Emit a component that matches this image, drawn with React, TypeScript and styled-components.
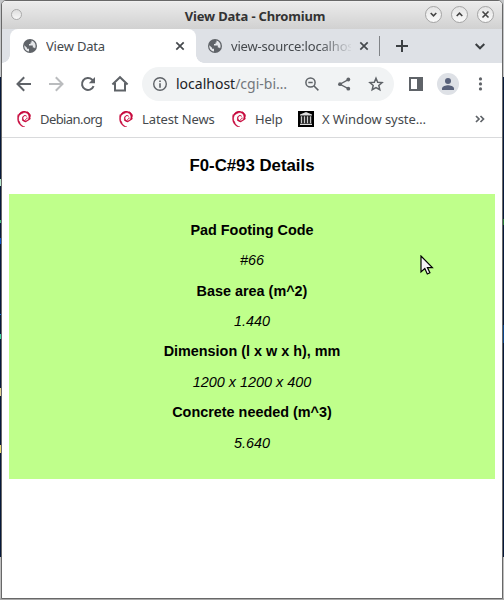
import React from "react";
import styled, { createGlobalStyle, css } from "styled-components";
import { SiDebian } from "react-icons/si";

const GlobalStyle = createGlobalStyle`
  * { box-sizing: border-box; }
  html, body { margin: 0; padding: 0; overflow: hidden; }
`;

const Desktop = styled.div`
  width: 504px;
  height: 600px;
  padding: 0 1px 1px;
  background:
    linear-gradient(#b5e8cc, #b5e8cc) 0 179px / 1px 7px no-repeat,
    linear-gradient(#40c080, #40c080) 0 220px / 1px 3px no-repeat,
    linear-gradient(#0850c8, #0850c8) 0 238px / 1px 6px no-repeat,
    linear-gradient(#0870d8, #0870d8) 0 314px / 1px 1px no-repeat,
    linear-gradient(#38d8a0, #38d8a0) 0 334px / 1px 5px no-repeat,
    linear-gradient(#e0d090, #e0d090) 0 388px / 1px 8px no-repeat,
    linear-gradient(#e8d870, #e8d870) 0 445px / 1px 8px no-repeat,
    linear-gradient(#237a38, #237a38) 503px 219px / 1px 6px no-repeat,
    linear-gradient(#08428a, #08428a) 503px 325px / 1px 18px no-repeat,
    linear-gradient(#c4c6c8 0 77px, #06183a 77px 557px, #bfbfbf 557px 598px, #aaa 598px);
`;

const Window = styled.div`
  height: 599px;
  display: flex;
  flex-direction: column;
  overflow: hidden;
  border: 1px solid #686868;
  border-radius: 5px 5px 0 0;
  background: #fff;
  font-family: "Noto Sans", sans-serif;
`;

const TitleBar = styled.header`
  height: 28px;
  flex: none;
  display: grid;
  grid-template-columns: 94px 1fr 94px;
  align-items: center;
  background: linear-gradient(#ebebeb, #d1d1d1);
  border-top: 1px solid #f0f0f0;
`;

const WindowMenu = styled.i`
  width: 11px;
  height: 11px;
  margin: -3px 0 0 9px;
  border: 1px solid #aaa;
  border-radius: 50%;
  background: linear-gradient(#dedede, #f7f7f7);
`;

const WindowTitle = styled.h1`
  margin: 1px 0 0 6px;
  text-align: center;
  white-space: nowrap;
  font-size: 13px;
  letter-spacing: -0.18px;
  line-height: 18px;
  font-weight: 700;
  color: #333;
`;

const WindowControls = styled.div`
  display: flex;
  justify-content: flex-end;
  gap: 9px;
  padding: 0 8px 2px 0;
`;

const RoundButton = styled.button`
  width: 17px;
  height: 17px;
  padding: 0;
  display: grid;
  place-items: center;
  border: 1px solid #a4a4a4;
  border-radius: 50%;
  background: linear-gradient(#e4e4e4, #fafafa);
  color: #444;
`;

const TabStrip = styled.nav`
  height: 34px;
  flex: none;
  display: flex;
  padding-left: 8px;
  background: #dee1e6;
`;

const Tab = styled.div<{ $active?: boolean }>`
  position: relative;
  width: ${(p) => (p.$active ? 186 : 183)}px;
  height: 34px;
  padding: 0 ${(p) => (p.$active ? 11 : 10)}px 0 ${(p) => (p.$active ? 12 : 11)}px;
  display: flex;
  align-items: center;
  color: #45494d;
  ${(p) =>
    p.$active &&
    css`
      background: #fff;
      border-radius: 8px 8px 0 0;
      &::before,
      &::after {
        content: "";
        position: absolute;
        bottom: 0;
        width: 8px;
        height: 8px;
      }
      &::before {
        left: -8px;
        background: radial-gradient(circle at 0 0, transparent 7.5px, #fff 8px);
      }
      &::after {
        right: -8px;
        background: radial-gradient(circle at 100% 0, transparent 7.5px, #fff 8px);
      }
    `}
`;

const TabTitle = styled.span<{ $fade?: boolean }>`
  flex: 1;
  margin: 0 8px 0 8px;
  overflow: hidden;
  white-space: nowrap;
  font-size: 13px;
  letter-spacing: -0.18px;
  line-height: 18px;
  ${(p) => p.$fade && "mask-image: linear-gradient(90deg, #000 88px, transparent 122px);"}
`;

const TabDivider = styled.i`
  width: 1px;
  height: 20px;
  margin: 7px 6px 0 0;
  background: #808387;
`;

const StripButton = styled.button<{ $end?: boolean }>`
  width: 32px;
  height: 34px;
  padding: 0;
  margin-left: ${(p) => (p.$end ? "auto" : 0)};
  margin-right: ${(p) => (p.$end ? 6 : 0)}px;
  display: grid;
  place-items: center;
  border: 0;
  background: none;
  color: #3c4043;
`;

const Toolbar = styled.div`
  height: 41px;
  flex: none;
  display: flex;
  align-items: center;
  padding: 1px 6px 0;
`;

const IconCell = styled.button<{ $muted?: boolean }>`
  width: 32px;
  height: 32px;
  flex: none;
  padding: 0;
  display: grid;
  place-items: center;
  border: 0;
  background: none;
  color: ${(p) => (p.$muted ? "#babcbe" : "#5f6368")};
`;

const AddressBar = styled.div`
  width: 252px;
  height: 34px;
  margin: 0 6px;
  padding: 0 2px;
  display: flex;
  align-items: center;
  border-radius: 17px;
  background: #f1f3f4;
`;

const Address = styled.span`
  flex: 1;
  white-space: nowrap;
  font-size: 14px;
  line-height: 20px;
  color: #73777c;
  b {
    font-weight: 400;
    color: #202124;
  }
`;

const Avatar = styled.i`
  width: 22px;
  height: 22px;
  display: grid;
  place-items: center;
  border-radius: 50%;
  background: #dee1e6;
  color: #58617a;
`;

const Bookmarks = styled.div`
  height: 34px;
  flex: none;
  display: flex;
  align-items: center;
  padding: 0 15px 3px 14px;
  border-bottom: 1px solid #d9dadc;
`;

const Bookmark = styled.a<{ $width: number; $tracking: number }>`
  width: ${(p) => p.$width}px;
  flex: none;
  display: flex;
  align-items: center;
  gap: 8px;
  white-space: nowrap;
  font-size: 13px;
  line-height: 18px;
  letter-spacing: ${(p) => p.$tracking}px;
  color: #45494d;
  svg {
    flex: none;
  }
`;

const DebianMark = styled(SiDebian)`
  stroke-width: 0.9;
`;

const Overflow = styled.span`
  margin: 0 1px 0 auto;
  display: flex;
  color: #5f6368;
`;

const Page = styled.main`
  flex: 1;
  padding: 0 7px;
  font-family: "Liberation Sans", Arial, sans-serif;
  text-align: center;
  color: #000;
`;

const PageTitle = styled.h2`
  height: 56px;
  margin: 0;
  font-size: 16.8px;
  line-height: 55px;
  font-weight: 700;
`;

const Details = styled.dl`
  height: 285px;
  margin: 0;
  padding-top: 20.8px;
  background: #bfff8b;
  font-size: 14.4px;
`;

const Label = styled.dt`
  height: 30.43px;
  line-height: 30.43px;
  font-weight: 700;
`;

const Value = styled.dd`
  height: 30.43px;
  margin: 0;
  line-height: 30.43px;
  font-style: italic;
`;

const Pointer = styled.svg`
  position: absolute;
  left: 420px;
  top: 255px;
`;

const Globe = () => (
  <svg width="16" height="16" viewBox="0 0 16 16">
    <circle cx="8" cy="8" r="7" fill="#5f6368" />
    <path
      d="M2.3 7.2L5 9.8v1h2v2.7C4.2 13.2 2 10.8 2.3 7.2zM9.5 2.6C12 3.3 13.6 5.4 13.6 8c0 1-.2 1.8-.6 2.4-.3-.5-.8-.8-1.4-.8h-.8v-2H7V6h1.5V4.4h1z"
      fill="#e4e6e9"
    />
  </svg>
);

const Close = () => (
  <svg width="10" height="10" viewBox="0 0 10 10">
    <path d="M1.3 1.3l7.4 7.4M8.7 1.3L1.3 8.7" stroke="#45494d" strokeWidth="1.7" />
  </svg>
);

const Line = ({ d, size = 18, width = 2 }: { d: string; size?: number; width?: number }) => (
  <svg width={size} height={size} viewBox={`0 0 ${size} ${size}`} fill="none" stroke="currentColor" strokeWidth={width}>
    <path d={d} />
  </svg>
);

const Institution = () => (
  <svg width="16" height="16" viewBox="0 0 16 16">
    <path d="M0 0h16v16H0z" fill="#000" />
    <path d="M8 1l6 2.4v1H2v-1zM2 12.8h12V14H2z" fill="#ddd" />
    <path d="M3.5 5.2v7M6.5 5.2v7M9.5 5.2v7M12.5 5.2v7" stroke="#c9c9c9" strokeWidth="1.5" />
  </svg>
);

const bookmarks = [
  { label: "Debian.org", width: 102, tracking: -0.58 },
  { label: "Latest News", width: 113, tracking: -0.1 },
  { label: "Help", width: 67, tracking: -0.2 },
];

const details = [
  ["Pad Footing Code", "#66"],
  ["Base area (m^2)", "1.440"],
  ["Dimension (l x w x h), mm", "1200 x 1200 x 400"],
  ["Concrete needed (m^3)", "5.640"],
];

export default function App() {
  return (
    <Desktop>
      <GlobalStyle />
      <Window>
        <TitleBar>
          <WindowMenu />
          <WindowTitle>View Data - Chromium</WindowTitle>
          <WindowControls>
            <RoundButton><Line size={9} width={1.6} d="M1.7 3l2.8 2.8L7.3 3" /></RoundButton>
            <RoundButton><Line size={9} width={1.6} d="M1.7 6l2.8-2.8L7.3 6" /></RoundButton>
            <RoundButton><Line size={9} width={1.6} d="M1.5 1.5l6 6M7.5 1.5l-6 6" /></RoundButton>
          </WindowControls>
        </TitleBar>
        <TabStrip>
          <Tab $active>
            <Globe />
            <TabTitle>View Data</TabTitle>
            <Close />
          </Tab>
          <Tab>
            <Globe />
            <TabTitle $fade>view-source:localhost</TabTitle>
            <Close />
          </Tab>
          <TabDivider />
          <StripButton><Line size={14} d="M7 1v12M1 7h12" /></StripButton>
          <StripButton $end><Line size={12} d="M1.7 4L6 8.3 10.3 4" /></StripButton>
        </TabStrip>
        <Toolbar>
          <IconCell><Line d="M16 9H3M9.2 2.3L2.5 9l6.7 6.7" /></IconCell>
          <IconCell $muted><Line d="M2 9h13M8.8 2.3L15.5 9l-6.7 6.7" /></IconCell>
          <IconCell>
            <svg width="18" height="18" viewBox="0 0 18 18">
              <path d="M14.6 11.2A6 6 0 1 1 13.2 4.7L14.5 6" fill="none" stroke="currentColor" strokeWidth="2" />
              <path d="M16 2v6.2H9.8z" fill="currentColor" />
            </svg>
          </IconCell>
          <IconCell><Line d="M1.4 9.5L9 2.2l7.6 7.3M4 8v7.5h10V8" /></IconCell>
          <AddressBar>
            <IconCell>
              <svg width="16" height="16" viewBox="0 0 16 16">
                <circle cx="8" cy="8" r="6.3" fill="none" stroke="currentColor" strokeWidth="1.4" />
                <path d="M7.2 4.4h1.6V6H7.2zM7.2 7.2h1.6v4.5H7.2z" fill="currentColor" />
              </svg>
            </IconCell>
            <Address><b>localhost</b>/cgi-bi…</Address>
            <IconCell>
              <svg width="16" height="16" viewBox="0 0 16 16" fill="none" stroke="currentColor" strokeWidth="1.5">
                <circle cx="6.5" cy="6.5" r="4.6" />
                <path d="M4.3 6.5h4.4M9.8 9.8l4.6 4.6" />
              </svg>
            </IconCell>
            <IconCell>
              <svg width="16" height="16" viewBox="0 0 16 16" fill="currentColor">
                <path d="M12.3 3.6L4 8.2l8.3 4.4" fill="none" stroke="currentColor" strokeWidth="1.3" />
                <circle cx="12.3" cy="3.5" r="1.9" />
                <circle cx="4" cy="8.2" r="1.9" />
                <circle cx="12.3" cy="12.7" r="1.9" />
              </svg>
            </IconCell>
            <IconCell>
              <Line size={16} width={1.5} d="M8 2.2l1.7 4 4.4.4-3.3 2.9 1 4.2L8 11.5l-3.8 2.2 1-4.2-3.3-2.9 4.4-.4z" />
            </IconCell>
          </AddressBar>
          <IconCell>
            <svg width="16" height="16" viewBox="0 0 16 16">
              <path d="M1 1h14v14H1zM3 3v10h6V3z" fill="currentColor" fillRule="evenodd" />
            </svg>
          </IconCell>
          <IconCell>
            <Avatar>
              <svg width="16" height="16" viewBox="0 0 16 16" fill="currentColor">
                <circle cx="8" cy="4.9" r="3" />
                <path d="M2 14v-1.5C2 10.5 6 9.3 8 9.3s6 1.2 6 3.2V14z" />
              </svg>
            </Avatar>
          </IconCell>
          <IconCell>
            <svg width="16" height="16" viewBox="0 0 16 16" fill="currentColor">
              <circle cx="8.5" cy="2.9" r="1.6" />
              <circle cx="8.5" cy="7.9" r="1.6" />
              <circle cx="8.5" cy="12.9" r="1.6" />
            </svg>
          </IconCell>
        </Toolbar>
        <Bookmarks>
          {bookmarks.map((b) => (
            <Bookmark key={b.label} $width={b.width} $tracking={b.tracking}>
              <DebianMark size={16} color="#c70039" />
              {b.label}
            </Bookmark>
          ))}
          <Bookmark $width={140} $tracking={-0.08}>
            <Institution />
            X Window syste…
          </Bookmark>
          <Overflow><Line size={12} width={1.7} d="M2 3l3 3-3 3M6.5 3l3 3-3 3" /></Overflow>
        </Bookmarks>
        <Page>
          <PageTitle>F0-C#93 Details</PageTitle>
          <Details>
            {details.map(([label, value]) => (
              <React.Fragment key={label}>
                <Label>{label}</Label>
                <Value>{value}</Value>
              </React.Fragment>
            ))}
          </Details>
        </Page>
      </Window>
      <Pointer width="14" height="21" viewBox="0 0 14 21">
        <path d="M1 1v16l3.8-3.4L7.3 19l2.6-1.2-2.5-5.2h5z" fill="#f4f4f4" stroke="#000" strokeWidth="1.2" />
      </Pointer>
    </Desktop>
  );
}
